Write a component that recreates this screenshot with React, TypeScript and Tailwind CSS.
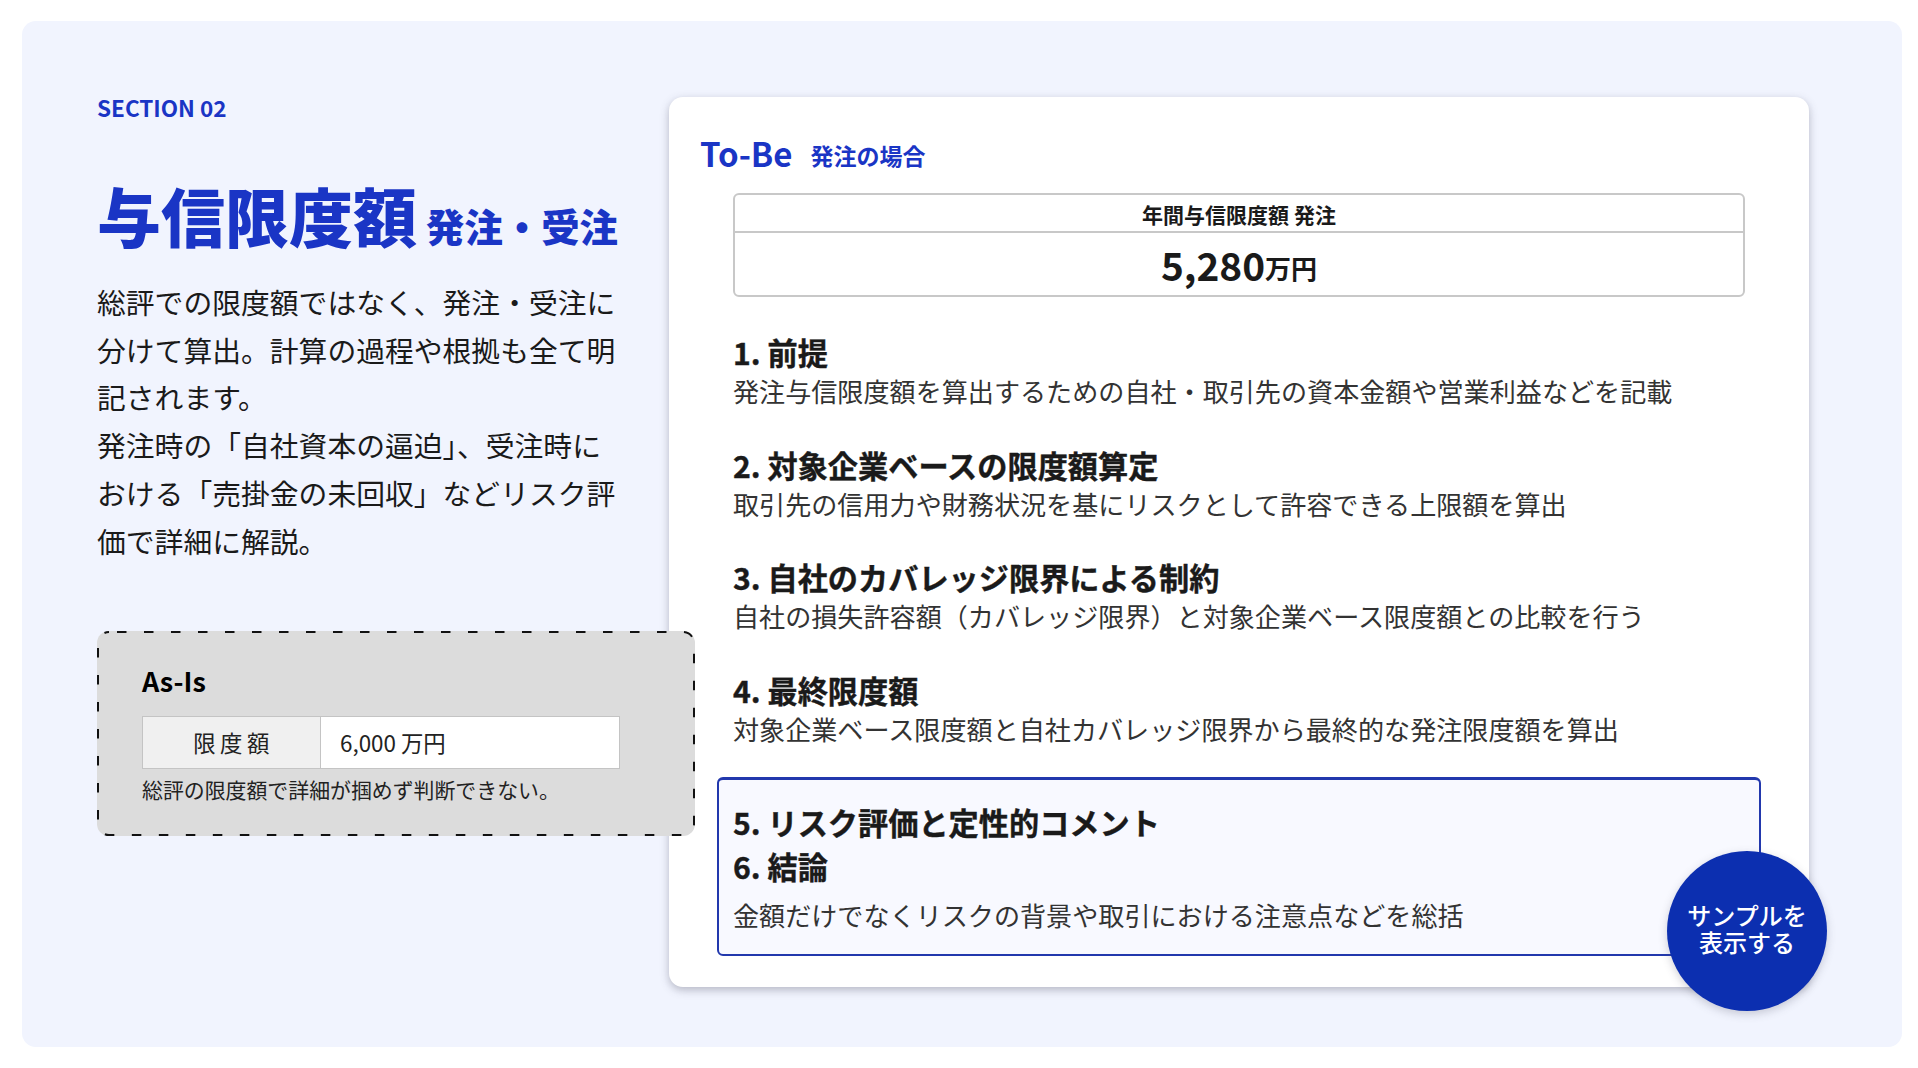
import React from 'react';

const font = "font-['Noto_Sans_CJK_JP','Noto_Sans',sans-serif]";

const steps = [
  {
    title: '1. 前提',
    text: '発注与信限度額を算出するための自社・取引先の資本金額や営業利益などを記載',
  },
  {
    title: '2. 対象企業ベースの限度額算定',
    text: '取引先の信用力や財務状況を基にリスクとして許容できる上限額を算出',
  },
  {
    title: '3. 自社のカバレッジ限界による制約',
    text: '自社の損失許容額（カバレッジ限界）と対象企業ベース限度額との比較を行う',
  },
  {
    title: '4. 最終限度額',
    text: '対象企業ベース限度額と自社カバレッジ限界から最終的な発注限度額を算出',
  },
];

const StepHeading = ({ children }: { children: React.ReactNode }) => (
  <h3 className="w-fit text-[30.2px] leading-[40px] font-bold whitespace-nowrap text-[#1a1a1a] [-webkit-text-stroke:0.4px_#1a1a1a]">
    {children}
  </h3>
);

const StepText = ({ children }: { children: React.ReactNode }) => (
  <p className="w-fit text-[26.1px] leading-[38px] text-[#333333] whitespace-nowrap">{children}</p>
);

const AsIsBox = () => (
  <div className="relative z-10 mt-[67px] h-[205px] w-[598px] rounded-[12px] bg-[#dcdcdc] pt-[34px] pl-[45px]">
    {/* the dash rhythm is longer than border-dashed can give */}
    <svg className="absolute inset-0" width="598" height="205" fill="none">
      <rect
        x="1"
        y="1"
        width="596"
        height="203"
        rx="11"
        stroke="#111111"
        strokeWidth="2"
        strokeDasharray="9.5 17.5"
        strokeDashoffset="-8"
      />
    </svg>
    <h3 className="text-[27px] leading-[32px] font-semibold text-black">As-Is</h3>
    <div className="mt-[19px] flex h-[53px] w-[478px] border border-[#c4c4c4] bg-white text-[22.4px] text-[#222222]">
      <div className="flex w-[178px] items-center justify-center border-r border-[#c4c4c4] bg-[#f0f0f0] pl-[4px] tracking-[0.2em]">
        限度額
      </div>
      <div className="flex items-center pl-[19px]">6,000 万円</div>
    </div>
    <p className="mt-[6px] text-[20.9px] leading-[28px] text-[#222222]">
      総評の限度額で詳細が掴めず判断できない。
    </p>
  </div>
);

const ToBeCard = () => (
  <div className="relative mt-[2px] flex h-[890px] w-[1140px] shrink-0 flex-col rounded-[14px] bg-white px-[64px] pt-[37px] shadow-[0_3px_9px_rgba(70,70,90,0.35)]">
    <div className="-ml-[33px] flex h-[40px] items-center text-[#1a35c5]">
      <span className="text-[33px] font-bold">To-Be</span>
      <span className="ml-[18px] pt-[2px] text-[23px] font-bold">発注の場合</span>
    </div>
    <div className="mt-[19px] h-[104px] rounded-[6px] border-2 border-[#c8c8c8] text-[#1a1a1a]">
      <div className="flex h-[38px] items-center justify-center border-b-2 border-[#c8c8c8] pt-[4px] text-[21px] font-semibold">
        年間与信限度額 発注
      </div>
      <div className="flex h-[62px] items-center justify-center font-bold">
        <span className="text-[38.8px]">5,280</span>
        <span className="pt-[6px] text-[26px]">万円</span>
      </div>
    </div>
    <div className="mt-[35px] flex flex-col gap-[34.7px]">
      {steps.map((step) => (
        <div key={step.title}>
          <StepHeading>{step.title}</StepHeading>
          <StepText>{step.text}</StepText>
        </div>
      ))}
    </div>
    <div className="-mx-4 mt-[29px] h-[179px] rounded-[6px] border-2 border-t-[3px] border-[#2238ad] bg-[#f8f9ff] pt-[22px] pl-[14px]">
      <div className="flex flex-col gap-[4px]">
        <StepHeading>5. リスク評価と定性的コメント</StepHeading>
        <StepHeading>6. 結論</StepHeading>
      </div>
      <div className="mt-[10px]">
        <StepText>金額だけでなくリスクの背景や取引における注意点などを総括</StepText>
      </div>
    </div>
    <div className="absolute right-[-18px] bottom-[-24px] flex h-[160px] w-[160px] items-center justify-center rounded-full bg-[#0c2fb0] pb-[7px] text-center text-[24px] leading-[27px] font-medium text-white shadow-[0_3px_8px_rgba(70,70,90,0.25)]">
      サンプルを
      <br />
      表示する
    </div>
  </div>
);

export default function App() {
  return (
    <div className={`h-[1068px] w-[1918px] bg-white pt-[21px] pr-[16px] pl-[22px] ${font}`}>
      <div className="flex h-[1026px] justify-between rounded-[14px] bg-[#f1f4fe] pt-[74px] pr-[93px] pl-[75px]">
        <div className="w-[540px]">
          <p className="text-[22.5px] leading-[24px] font-bold text-[#1a35c5]">SECTION 02</p>
          <h1 className="mt-[55px] flex h-[80px] items-center whitespace-nowrap font-black text-[#1a35c5]">
            <span className="text-[64px]">与信限度額</span>
            <span className="ml-[9px] pt-[24px] text-[38.4px]">発注・受注</span>
          </h1>
          <p className="mt-[24px] w-[530px] text-[28.8px] leading-[47.7px] text-[#1a1a1a]">
            総評での限度額ではなく、発注・受注に分けて算出。計算の過程や根拠も全て明記されます。
            <br />
            発注時の「自社資本の逼迫」、受注時における「売掛金の未回収」などリスク評価で詳細に解説。
          </p>
          <AsIsBox />
        </div>
        <ToBeCard />
      </div>
    </div>
  );
}
